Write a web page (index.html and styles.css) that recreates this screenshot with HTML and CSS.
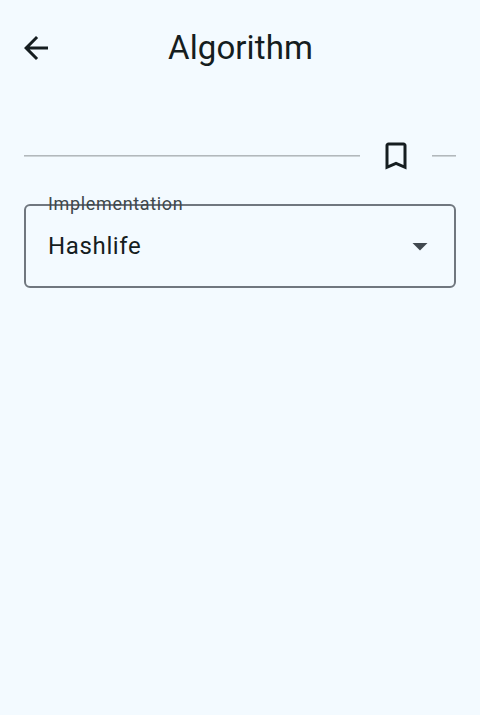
FILE: index.html
```html
<!DOCTYPE html>
<html lang="en">
<head>
<meta charset="utf-8">
<title>Algorithm</title>
<link rel="stylesheet" href="styles.css">
</head>
<body>
<header class="top-bar">
  <svg class="icon" viewBox="0 0 24 24"><path d="M20 11H7.83l5.59-5.59L12 4l-8 8 8 8 1.41-1.41L7.83 13H20v-2z"/></svg>
  <h1 class="title">Algorithm</h1>
</header>
<main class="content">
  <div class="divider-row">
    <span class="line line-long"></span>
    <svg class="icon" viewBox="0 0 24 24"><path d="M17 3H7c-1.1 0-1.99.9-1.99 2L5 21l7-3 7 3V5c0-1.1-.9-2-2-2zm0 15l-5-2.18L7 18V5h10v13z"/></svg>
    <span class="line line-short"></span>
  </div>
  <div class="field">
    <span class="label">Implementation</span>
    <span class="value">Hashlife</span>
    <svg class="icon arrow" viewBox="0 0 24 24"><path d="M7 10l5 5 5-5z"/></svg>
  </div>
</main>
</body>
</html>
```

FILE: styles.css
```css
* {
  box-sizing: border-box;
}

body {
  margin: 0;
  min-height: 715px;
  background: #f3faff;
  color: #151d20;
  font-family: Roboto, sans-serif;
}

.icon {
  display: block;
  flex: none;
  width: 36px;
  height: 36px;
  fill: currentColor;
}

.top-bar {
  display: grid;
  grid-template-columns: 36px 1fr 36px;
  align-items: center;
  height: 96px;
  padding: 0 18px;
}

.title {
  margin: 0;
  padding-left: 1px;
  font-size: 33px;
  font-weight: 400;
  line-height: 42px;
  letter-spacing: 0.1px;
  text-align: center;
}

.content {
  padding: 42px 24px 0;
}

.divider-row {
  display: flex;
  align-items: center;
  height: 36px;
}

.line {
  height: 2px;
  background: linear-gradient(#b2b8bc 50%, #cdd4d8 50%);
}

.line-long {
  flex: 1;
  margin-right: 18px;
}

.line-short {
  width: 24px;
  margin-left: 18px;
}

.field {
  position: relative;
  display: flex;
  align-items: center;
  justify-content: space-between;
  height: 84px;
  margin-top: 30px;
  padding: 0 16px 0 22px;
  border: 2px solid #70777f;
  border-radius: 6px;
}

.label {
  position: absolute;
  top: -14px;
  left: 22px;
  color: #40484c;
  font-size: 18px;
  line-height: 24px;
  letter-spacing: 0.66px;
}

.value {
  font-size: 24px;
  line-height: 36px;
  letter-spacing: 0.65px;
}

.arrow {
  color: #40484f;
}
```
